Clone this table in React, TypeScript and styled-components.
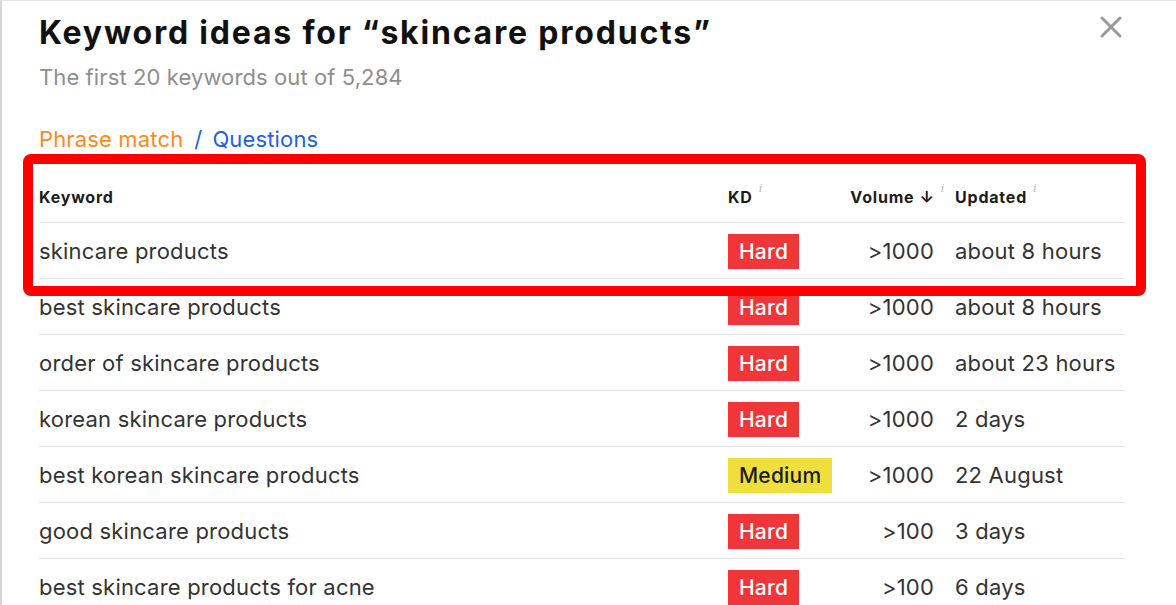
import React from "react";
import styled, { createGlobalStyle } from "styled-components";

const GlobalStyle = createGlobalStyle`
  html, body {
    margin: 0;
    padding: 0;
    background: #ffffff;
    overflow: hidden;
  }
  body {
    font-family: Inter, "Noto Sans", "Liberation Sans", sans-serif;
    color: #333333;
  }
`;

type Difficulty = "Hard" | "Medium";

interface KeywordRow {
  keyword: string;
  kd: Difficulty;
  volume: string;
  updated: string;
}

const rows: KeywordRow[] = [
  { keyword: "skincare products", kd: "Hard", volume: ">1000", updated: "about 8 hours" },
  { keyword: "best skincare products", kd: "Hard", volume: ">1000", updated: "about 8 hours" },
  { keyword: "order of skincare products", kd: "Hard", volume: ">1000", updated: "about 23 hours" },
  { keyword: "korean skincare products", kd: "Hard", volume: ">1000", updated: "2 days" },
  { keyword: "best korean skincare products", kd: "Medium", volume: ">1000", updated: "22 August" },
  { keyword: "good skincare products", kd: "Hard", volume: ">100", updated: "3 days" },
  { keyword: "best skincare products for acne", kd: "Hard", volume: ">100", updated: "6 days" },
];

const Panel = styled.div`
  position: relative;
  box-sizing: border-box;
  height: 605px;
  overflow: hidden;
  border-top: 1px solid #e4e4e4;
  border-left: 2px solid #d6d6d6;
  padding: 13px 51px 0 37px;
`;

const HeaderRow = styled.div`
  display: flex;
  justify-content: space-between;
  align-items: flex-start;
`;

const Title = styled.h1`
  margin: 0;
  font-size: 32px;
  line-height: 38px;
  font-weight: 700;
  color: #111111;
  letter-spacing: 1.8px;
`;

const CloseButton = styled.button`
  display: flex;
  align-items: center;
  justify-content: center;
  width: 28px;
  height: 28px;
  margin: -1px 0 0 0;
  padding: 0;
  border: none;
  background: transparent;
  cursor: pointer;
`;

const Subtitle = styled.p`
  margin: 12px 0 0;
  font-size: 22px;
  line-height: 26px;
  color: #8e8e8e;
  letter-spacing: 0.1px;
`;

const Tabs = styled.div`
  margin-top: 36px;
  font-size: 22px;
  line-height: 26px;
  display: flex;
  letter-spacing: 0.15px;
`;

const Tab = styled.span<{ $active?: boolean }>`
  color: ${(p) => (p.$active ? "#ff8a1c" : "#1f5fe6")};
`;

const Separator = styled.span`
  color: #1f5fe6;
  margin: 0 10px 0 11px;
`;

const Table = styled.div`
  margin-top: 18px;
`;

const Row = styled.div<{ $head?: boolean }>`
  display: grid;
  grid-template-columns: 1fr 112px 94px 191px;
  align-items: center;
  height: ${(p) => (p.$head ? "53px" : "56px")};
  border-bottom: 1px solid #e6e6e6;
  box-sizing: border-box;
`;

const HeadCell = styled.div<{ $right?: boolean; $pad?: boolean }>`
  display: flex;
  align-items: center;
  justify-content: ${(p) => (p.$right ? "flex-end" : "flex-start")};
  padding-left: ${(p) => (p.$pad ? "21px" : "0")};
  font-size: 16px;
  font-weight: 650;
  letter-spacing: 0.8px;
  color: #1c1c1c;
  padding-top: 2px;
`;

const Info = styled.span<{ $overhang?: boolean }>`
  font-family: "DejaVu Serif", serif;
  font-style: italic;
  font-size: 11px;
  font-weight: 400;
  color: #b8b8b8;
  align-self: flex-start;
  margin-top: -5px;
  margin-left: 6px;
  margin-right: ${(p) => (p.$overhang ? "-11px" : "0")};
`;

const Arrow = styled.span`
  margin-left: 5px;
  font-size: 16px;
`;

const Cell = styled.div<{ $right?: boolean; $pad?: boolean }>`
  font-size: 22px;
  line-height: 26px;
  letter-spacing: 0.2px;
  color: #333333;
  text-align: ${(p) => (p.$right ? "right" : "left")};
  padding-left: ${(p) => (p.$pad ? "21px" : "0")};
  white-space: nowrap;
`;

const Badge = styled.span<{ $level: Difficulty }>`
  display: inline-block;
  height: 35px;
  line-height: 35px;
  margin-top: 2px;
  padding: 0 11px;
  font-size: 21px;
  font-weight: 500;
  color: ${(p) => (p.$level === "Hard" ? "#ffffff" : "#1a1a1a")};
  background: ${(p) => (p.$level === "Hard" ? "#f23539" : "#eedf3c")};
`;

const Highlight = styled.div`
  position: absolute;
  left: 21px;
  top: 153px;
  width: 1123px;
  height: 142px;
  box-sizing: border-box;
  border: 10px solid #ff0000;
  border-radius: 8px;
  pointer-events: none;
`;

const CloseIcon = () => (
  <svg width="22" height="22" viewBox="0 0 22 22" fill="none">
    <path d="M2 2L20 20M20 2L2 20" stroke="#9a9a9a" strokeWidth="3" strokeLinecap="round" />
  </svg>
);

const App: React.FC = () => {
  return (
    <>
      <GlobalStyle />
      <Panel>
        <HeaderRow>
          <Title>Keyword ideas for “skincare products”</Title>
          <CloseButton aria-label="Close">
            <CloseIcon />
          </CloseButton>
        </HeaderRow>
        <Subtitle>The first 20 keywords out of 5,284</Subtitle>
        <Tabs>
          <Tab $active>Phrase match</Tab>
          <Separator>/</Separator>
          <Tab>Questions</Tab>
        </Tabs>
        <Table>
          <Row $head>
            <HeadCell>Keyword</HeadCell>
            <HeadCell>
              KD<Info>i</Info>
            </HeadCell>
            <HeadCell $right>
              Volume<Arrow>↓</Arrow>
              <Info $overhang>i</Info>
            </HeadCell>
            <HeadCell $pad>
              Updated<Info>i</Info>
            </HeadCell>
          </Row>
          {rows.map((r) => (
            <Row key={r.keyword}>
              <Cell>{r.keyword}</Cell>
              <Cell>
                <Badge $level={r.kd}>{r.kd}</Badge>
              </Cell>
              <Cell $right>{r.volume}</Cell>
              <Cell $pad>{r.updated}</Cell>
            </Row>
          ))}
        </Table>
        <Highlight />
      </Panel>
    </>
  );
};

export default App;
